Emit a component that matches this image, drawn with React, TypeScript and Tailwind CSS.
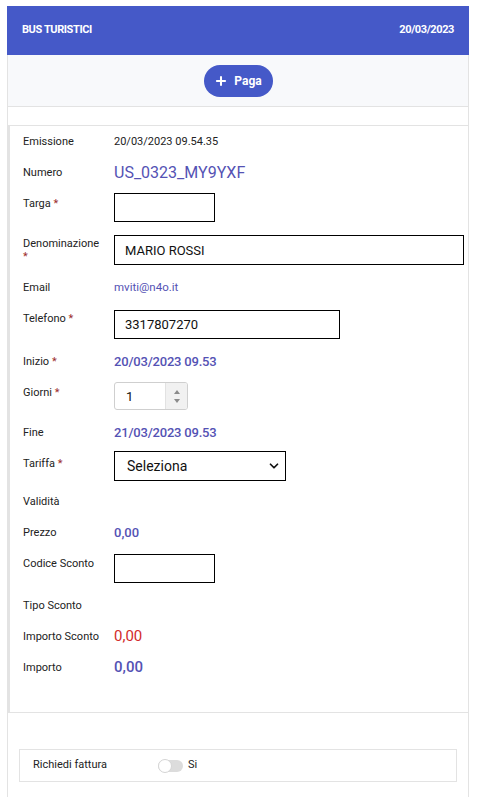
import { Plus, ChevronDown } from 'lucide-react';

function Star() {
  return <span className="text-[#9b2c2c]"> *</span>;
}

function Row({ label, children, twoLine = false }: { label: React.ReactNode; children: React.ReactNode; twoLine?: boolean }) {
  return (
    <div className="flex items-start py-[7px] text-[11px] leading-[17px]">
      <div className={twoLine ? 'w-[91px] shrink-0 text-[11px] leading-[13px] pt-[1px] text-[#222]' : 'w-[91px] shrink-0 text-[11px] leading-[17px] text-[#222]'}>
        {label}
      </div>
      <div className="flex-1 flex items-center min-h-[17px]">{children}</div>
    </div>
  );
}

function TextInput({ value = '', width, extra = '' }: { value?: string; width: string; extra?: string }) {
  return (
    <div className={`${width} ${extra} h-[29px] border border-black bg-white flex items-center pl-[10px] text-[13px] text-[#111]`}>
      {value}
    </div>
  );
}

export default function App() {
  const blue = 'text-[#5452b4]';
  return (
    <div className="h-[797px] overflow-hidden bg-white pt-[6px] pl-[7px]" style={{ fontFamily: 'Roboto, "Liberation Sans", sans-serif' }}>
      <div className="w-[462px] min-h-[791px] border-x border-[#e3e3e3]">
        {/* Header */}
        <div className="h-[49px] bg-[#4559c8] -mx-px flex items-center justify-between px-[15px] text-white text-[11px] font-bold tracking-[-0.4px]">
          <span>BUS TURISTICI</span>
          <span>20/03/2023</span>
        </div>

        {/* Toolbar */}
        <div className="h-[52px] bg-[#f8f9fb] border-b border-[#e3e3e3] flex items-center justify-center">
          <button className="h-[32px] w-[69px] rounded-full bg-[#4559c8] text-white flex items-center justify-center gap-[6px] text-[12px] font-bold">
            <Plus size={14} strokeWidth={3.5} />
            <span>Paga</span>
          </button>
        </div>

        <div className="h-[18px]" />

        {/* Form panel */}
        <div className="border-y border-[#e3e3e3] border-l-2 border-l-[#e3e3e3] pl-[13px] pr-[4px] pb-[29px]">
          <Row label="Emissione">
            <span className="text-[11px] text-[#222]">20/03/2023 09.54.35</span>
          </Row>
          <Row label="Numero">
            <span className={`text-[16px] ${blue}`}>US_0323_MY9YXF</span>
          </Row>
          <Row label={<>Targa<Star /></>}>
            <TextInput width="w-[101px]" extra="-mt-[2px]" />
          </Row>
          <Row label={<>Denominazione<br /><span className="text-[#9b2c2c]">*</span></>} twoLine>
            <TextInput value="MARIO ROSSI" width="w-[350px]" extra="-mt-[1px] h-[30px]" />
          </Row>
          <Row label="Email">
            <span className={`text-[11.5px] ${blue}`}>mviti@n4o.it</span>
          </Row>
          <Row label={<>Telefono<Star /></>}>
            <TextInput value="3317807270" width="w-[226px]" />
          </Row>
          <Row label={<>Inizio<Star /></>}>
            <span className={`text-[13px] font-medium tracking-[-0.2px] ${blue}`}>20/03/2023 09.53</span>
          </Row>
          <Row label={<>Giorni<Star /></>}>
            <div className="-mt-[2px] w-[74px] h-[28px] border border-[#cfcfcf] rounded-[3px] flex overflow-hidden bg-white">
              <div className="flex-1 flex items-center pl-[11px] text-[13px] text-[#111]">1</div>
              <div className="w-[22px] bg-[#f1f1f1] border-l border-[#e2e2e2] flex flex-col items-center justify-center gap-[5px]">
                <div className="w-0 h-0 border-x-[3.5px] border-x-transparent border-b-[4px] border-b-[#8a8a8a]" />
                <div className="w-0 h-0 border-x-[3.5px] border-x-transparent border-t-[4px] border-t-[#8a8a8a]" />
              </div>
            </div>
          </Row>
          <Row label="Fine">
            <span className={`text-[13px] font-medium tracking-[-0.2px] ${blue}`}>21/03/2023 09.53</span>
          </Row>
          <Row label={<>Tariffa<Star /></>}>
            <div className="w-[172px] h-[30px] border border-black bg-white flex items-center justify-between pl-[12px] pr-[4px] text-[14px] text-[#111] -mt-[4px] -mb-[2px]">
              <span>Seleziona</span>
              <ChevronDown size={14} strokeWidth={3} />
            </div>
          </Row>
          <Row label="Validità">
            <span />
          </Row>
          <Row label="Prezzo">
            <span className={`text-[13px] font-medium ${blue}`}>0,00</span>
          </Row>
          <Row label="Codice Sconto">
            <TextInput width="w-[101px]" extra="h-[28px] -mt-[1px]" />
          </Row>
          <Row label="Tipo Sconto">
            <span />
          </Row>
          <Row label="Importo Sconto">
            <span className="text-[15px] text-[#d22b2b]">0,00</span>
          </Row>
          <Row label="Importo">
            <span className={`text-[15px] font-medium ${blue}`}>0,00</span>
          </Row>
        </div>

        {/* Invoice */}
        <div className="pt-[36px] px-[11px]">
          <div className="h-[33px] border border-[#e3e3e3] flex items-center pl-[13px] text-[11px] text-[#222]">
            <span className="w-[125px]">Richiedi fattura</span>
            <div className="w-[25px] h-[12px] rounded-full bg-[#dcdcdc] relative">
              <div className="absolute left-0 top-[-1px] w-[14px] h-[14px] rounded-full bg-white border border-[#d5d5d5]" />
            </div>
            <span className="ml-[5px]">Si</span>
          </div>
        </div>
      </div>
    </div>
  );
}
